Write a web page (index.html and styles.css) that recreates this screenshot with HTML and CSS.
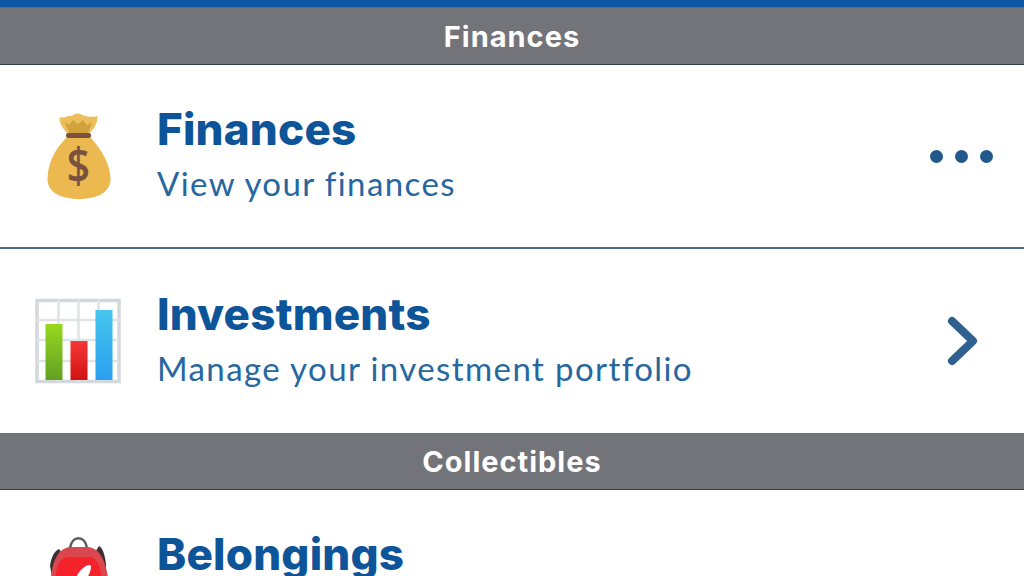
FILE: index.html

```html
<!DOCTYPE html>
<html lang="en">
<head>
  <meta charset="UTF-8" />
  <meta name="viewport" content="width=device-width, initial-scale=1" />
  <title>Assets</title>
  <link rel="stylesheet" href="styles.css">
</head>
<body>
  <div class="topbar"></div>

  <div class="section">Finances</div>

  <div class="row">
    <div class="row-icon">
      <svg width="70" height="90" viewBox="0 0 70 90">
        <path d="M22 27 C10 39 3.500 54 3.500 68 C3.500 82 18 88 35 88 C52 88 66.500 82 66.500 68 C66.500 54 58 39 47 27 Z" fill="#ebb94f"/>
        <path d="M15.500 6 C20 8 24 4 28 5 C31 2 35 2 38 4 C42 5 47 7 53.500 5 C54 11 50 18 45 23 L24 23 C19 18 15 12 15.500 6 Z" fill="#ecbf5c"/>
        <path d="M21 11 L25 14 L29 9 L34 13 L39 9 L43 14 L48 11 C47 15 45 20 43 23 L26 23 C24 20 22 15 21 11 Z" fill="#d2a33d"/>
        <rect x="22" y="22" width="25" height="5" rx="2" fill="#7a5140"/>
        <text class="bag-sign" transform="translate(34.500 72) scale(0.85 1)">$</text>
      </svg>
    </div>
    <div class="row-text">
      <div class="row-title">Finances</div>
      <div class="row-sub">View your finances</div>
    </div>
    <div class="row-action">
      <div class="dots"><span></span><span></span><span></span></div>
    </div>
  </div>

  <div class="row row-last">
    <div class="row-icon">
      <svg width="88" height="88" viewBox="0 0 88 88">
        <defs>
          <linearGradient id="barGreen" x1="0" y1="0" x2="0" y2="1"><stop offset="0" stop-color="#97d81e"/><stop offset="1" stop-color="#62a024"/></linearGradient>
          <linearGradient id="barRed" x1="0" y1="0" x2="0" y2="1"><stop offset="0" stop-color="#f73636"/><stop offset="1" stop-color="#cf1313"/></linearGradient>
          <linearGradient id="barBlue" x1="0" y1="0" x2="0" y2="1"><stop offset="0" stop-color="#46c6ee"/><stop offset="1" stop-color="#2a9ff0"/></linearGradient>
        </defs>
        <rect x="2" y="3.500" width="82" height="81" fill="#fff" stroke="#d3d8da" stroke-width="3.500"/>
        <path d="M23.500 3 V85 M43.500 3 V85 M63.500 3 V85 M2 23 H84 M2 43 H84 M2 64 H84" stroke="#dfe3e5" stroke-width="2.500" fill="none"/>
        <rect x="10.500" y="27" width="17" height="56" fill="url(#barGreen)"/>
        <rect x="35.500" y="44" width="17" height="39" fill="url(#barRed)"/>
        <rect x="60.500" y="13" width="17" height="70" fill="url(#barBlue)"/>
      </svg>
    </div>
    <div class="row-text">
      <div class="row-title">Investments</div>
      <div class="row-sub">Manage your investment portfolio</div>
    </div>
    <div class="row-action">
      <svg class="chevron" width="34" height="58" viewBox="0 0 34 58">
        <path d="M7 9 L28 29 L7 49" fill="none" stroke="#2f6090" stroke-width="8" stroke-linecap="round" stroke-linejoin="round"/>
      </svg>
    </div>
  </div>

  <div class="section">Collectibles</div>

  <div class="row">
    <div class="row-icon">
      <svg width="66" height="90" viewBox="0 0 66 90">
        <path d="M24 12 C26 -1 39 -1 41 12" fill="none" stroke="#5f5a5e" stroke-width="2.500"/>
        <path d="M4 30 C5 22 8 15 13 13 L18 20 L6 40 Z" fill="#3a2f33"/>
        <path d="M60 28 C59 20 57 12 53 10 L48 18 L60 38 Z" fill="#3a2f33"/>
        <path d="M5 42 C6 26 12 12 24 11 L42 11 C54 12 60 26 62 42 L62 90 L5 90 Z" fill="#d9474f"/>
        <path d="M9.500 44 C10 30 14 21 24 21 L42 21 C51 21 55 30 55.500 44 L55.500 90 L9.500 90 Z" fill="#f5212b"/>
        <path d="M36 33 C40 29 44 28 45 30 C45 37 41 43 36 47 L34 66 L27 66 C27 50 29 39 36 33 Z" fill="#fff"/>
      </svg>
    </div>
    <div class="row-text">
      <div class="row-title">Belongings</div>
    </div>
    <div class="row-action"></div>
  </div>
</body>
</html>
```

FILE: styles.css

```css
html, body {
  margin: 0;
  height: 576px;
  overflow: hidden;
}
body {
  font-family: Lato, "Open Sans", sans-serif;
  background: #fff;
  color: #0f5a9e;
}
.topbar {
  height: 7px;
  background: #0c56a3;
  border-bottom: 1px solid #4f6a8a;
}
.section {
  height: 57px;
  box-sizing: border-box;
  display: flex;
  align-items: center;
  justify-content: center;
  background: #737479;
  color: #fff;
  font-family: Inter, Lato, sans-serif;
  font-size: 29px;
  font-weight: 700;
  letter-spacing: 1px;
  border-bottom: 1px solid #2f3e50;
}
.row {
  height: 184px;
  box-sizing: border-box;
  display: flex;
  align-items: center;
  border-bottom: 2px solid #4e6a84;
}
.row-last {
  border-bottom: none;
}
.row-icon {
  width: 157px;
  flex: none;
  display: flex;
  justify-content: center;
}
.row-text {
  flex: 1;
  min-height: 104px;
}
.row-title {
  font-family: Inter, Lato, sans-serif;
  font-size: 44px;
  line-height: 50px;
  margin-bottom: 4px;
  font-weight: 800;
  letter-spacing: 0.2px;
  color: #0d5499;
}
.row-sub {
  font-size: 33px;
  line-height: 50px;
  letter-spacing: 1.4px;
  color: #26679f;
}
.row-action {
  width: 96px;
  flex: none;
  display: flex;
  align-items: center;
}
.dots {
  display: flex;
  gap: 12px;
  margin-left: 2px;
}
.dots span {
  width: 13px;
  height: 13px;
  border-radius: 50%;
  background: #22598a;
}
.chevron {
  margin-left: 17px;
}
.bag-sign {
  font-family: "Open Sans", sans-serif;
  font-size: 48px;
  font-weight: 600;
  fill: #79513f;
  text-anchor: middle;
}
```
